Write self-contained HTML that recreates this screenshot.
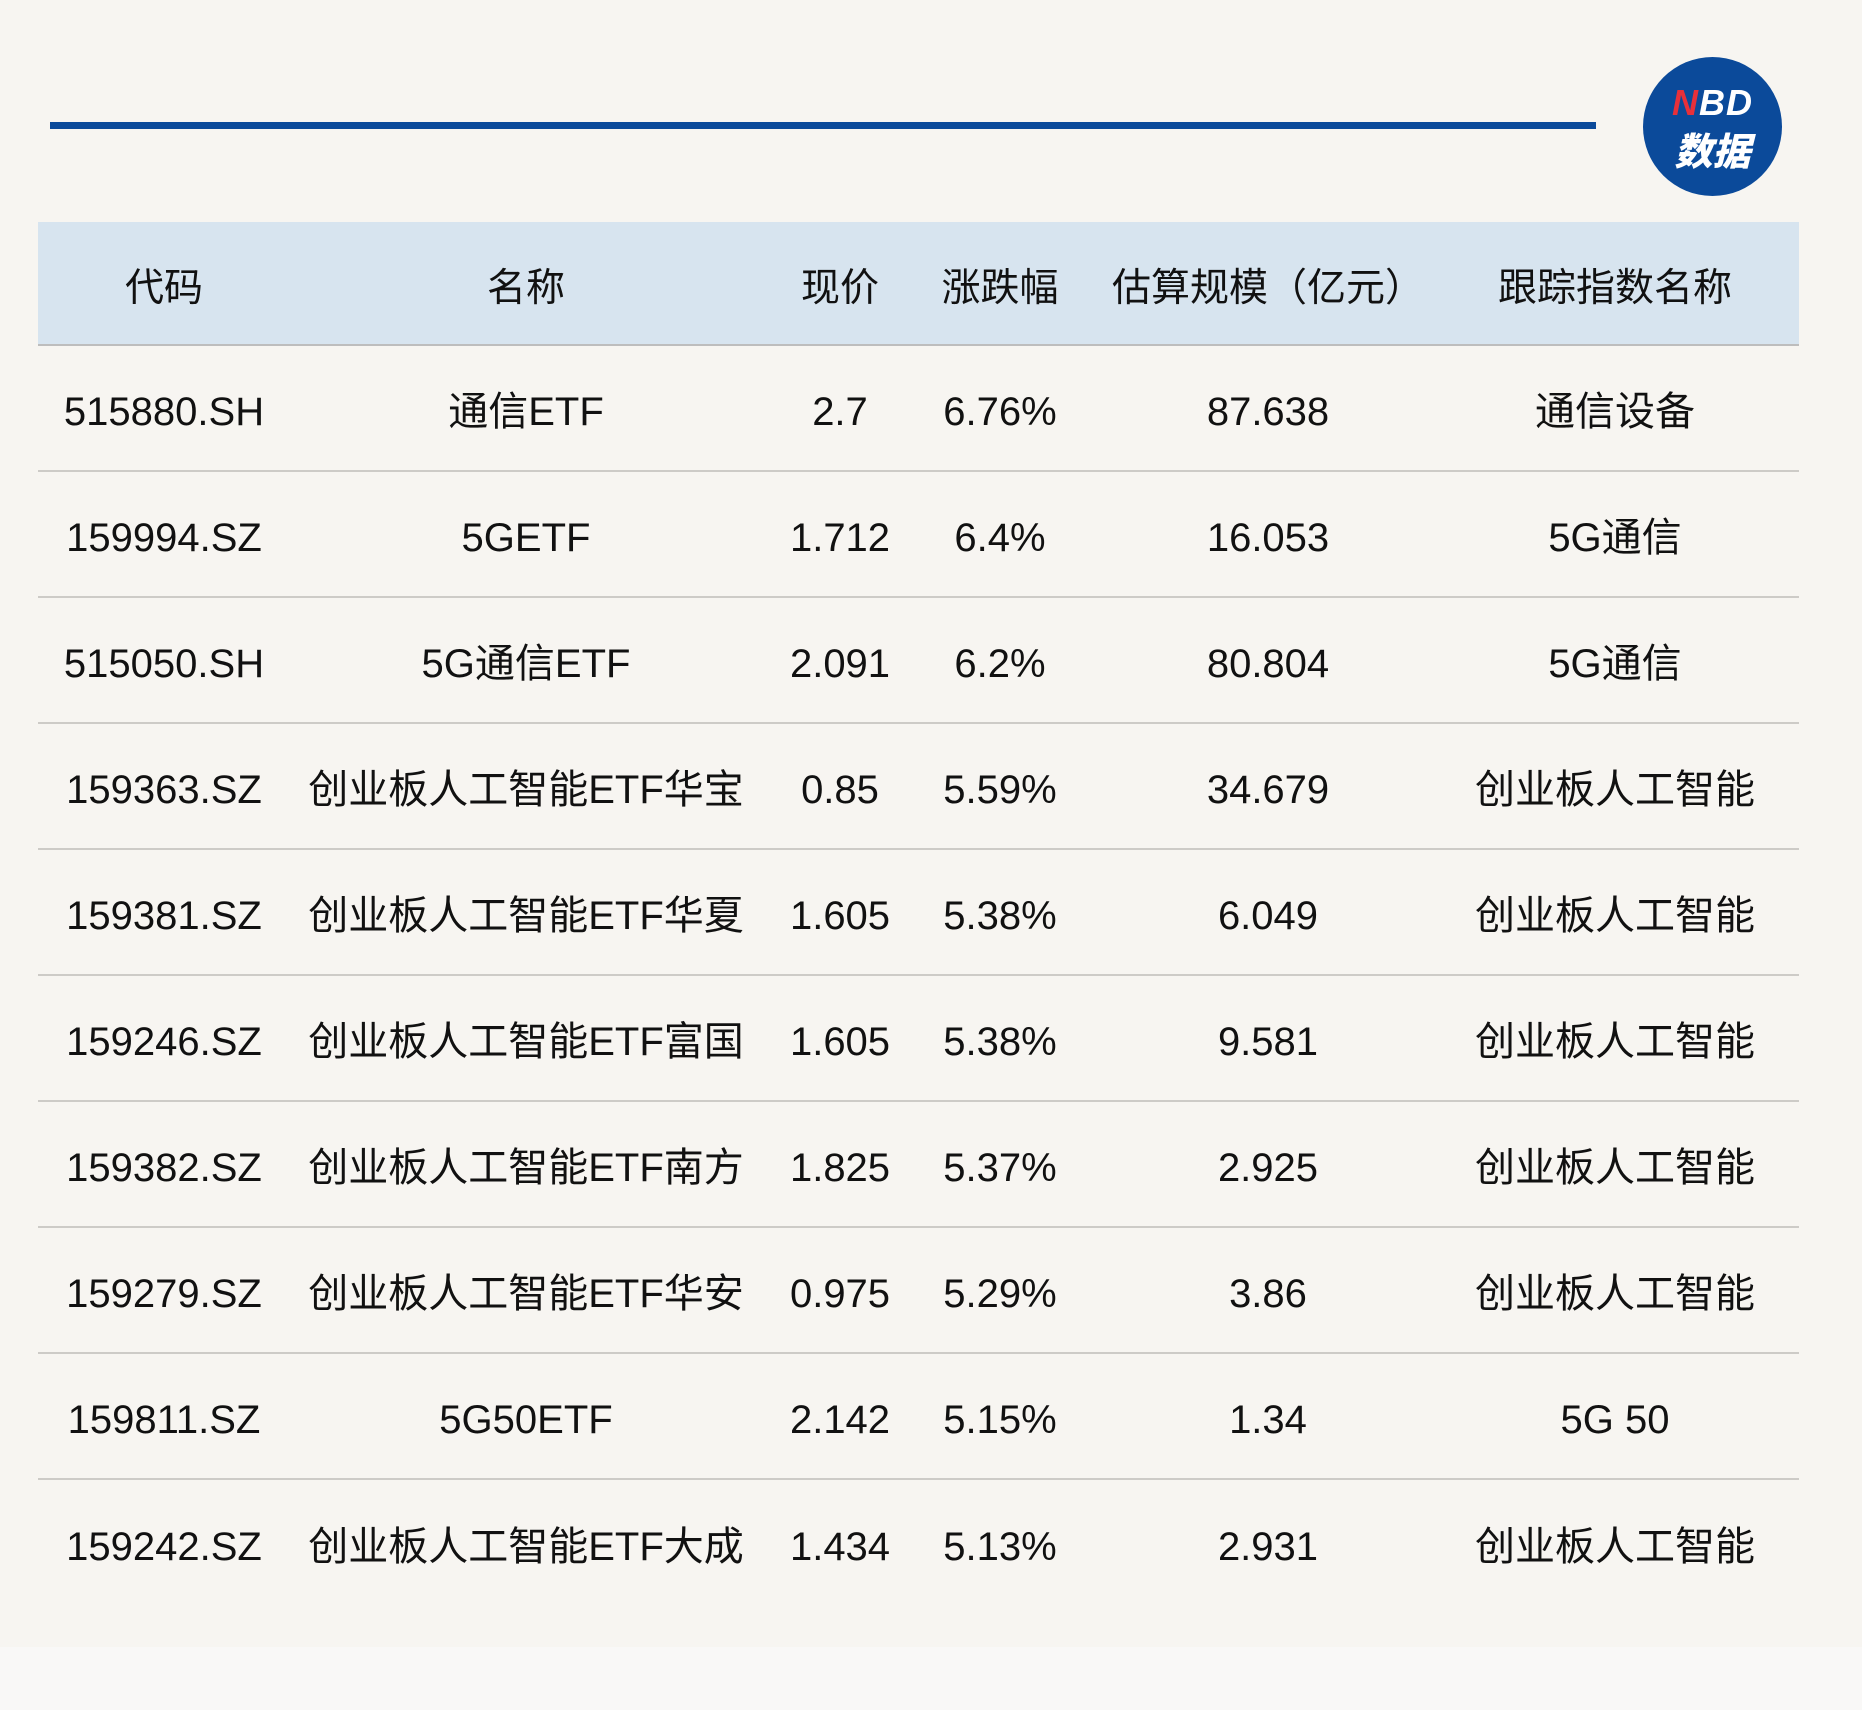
<!DOCTYPE html>
<html><head><meta charset="utf-8"><style>
*{margin:0;padding:0;box-sizing:border-box}
body{width:1862px;height:1710px;background:#f7f5f1;position:relative;overflow:hidden;font-family:"Liberation Sans","Noto Sans CJK SC",sans-serif;color:#111}
.bar{position:absolute;left:50px;top:122px;width:1546px;height:7px;background:#0b4a9a}
.logo{position:absolute;left:1643px;top:57px;width:139px;height:139px;border-radius:50%;background:#0b4a9a;color:#fff;text-align:center;font-weight:bold}
.logo .a{position:absolute;top:25px;left:0;right:0;font-size:36px;font-style:italic;letter-spacing:1px}
.logo .b{position:absolute;top:64px;left:0;right:0;font-size:38px;font-family:"Noto Sans CJK SC",sans-serif;font-weight:900;font-style:italic}
.hd{position:absolute;left:38px;top:222px;width:1761px;height:124px;background:#d7e4ef;border-bottom:2px solid #bdbdbd}
.row{position:absolute;left:38px;width:1761px;height:126px;border-bottom:2px solid #cdcbc7}
.c{position:absolute;top:0;height:100%;display:flex;align-items:center;justify-content:center;font-size:40px;white-space:nowrap;padding-top:8px;line-height:1}
.hd .c{font-family:"Noto Sans CJK SC",sans-serif;font-size:39px;padding-top:4px}
.foot{position:absolute;left:0;top:1647px;width:1862px;height:63px;background:#f9f8f7}
</style></head><body>
<div class="bar"></div>
<div class="logo"><div class="a"><span style="color:#e8303a">N</span>BD</div><div class="b">数据</div></div>
<div class="hd">
<div class="c" style="left:26px;width:200px">代码</div>
<div class="c" style="left:388px;width:200px">名称</div>
<div class="c" style="left:752px;width:100px">现价</div>
<div class="c" style="left:882px;width:160px">涨跌幅</div>
<div class="c" style="left:1060px;width:340px">估算规模（亿元）</div>
<div class="c" style="left:1427px;width:300px">跟踪指数名称</div>
</div>
<div id="rows"></div>
<div class="foot"></div>
<script>
var d=[["515880.SH","通信ETF","2.7","6.76%","87.638","通信设备"],["159994.SZ","5GETF","1.712","6.4%","16.053","5G通信"],["515050.SH","5G通信ETF","2.091","6.2%","80.804","5G通信"],["159363.SZ","创业板人工智能ETF华宝","0.85","5.59%","34.679","创业板人工智能"],["159381.SZ","创业板人工智能ETF华夏","1.605","5.38%","6.049","创业板人工智能"],["159246.SZ","创业板人工智能ETF富国","1.605","5.38%","9.581","创业板人工智能"],["159382.SZ","创业板人工智能ETF南方","1.825","5.37%","2.925","创业板人工智能"],["159279.SZ","创业板人工智能ETF华安","0.975","5.29%","3.86","创业板人工智能"],["159811.SZ","5G50ETF","2.142","5.15%","1.34","5G 50"],["159242.SZ","创业板人工智能ETF大成","1.434","5.13%","2.931","创业板人工智能"]];
var L=[[26,200],[288,400],[752,100],[882,160],[1060,340],[1427,300]];
var h="";
d.forEach(function(r,i){h+='<div class="row" style="top:'+(346+i*126)+'px;'+(i==9?'border-bottom:none':'')+'">';
r.forEach(function(t,j){h+='<div class="c" style="left:'+L[j][0]+'px;width:'+L[j][1]+'px">'+t+'</div>'});h+='</div>'});
document.getElementById('rows').innerHTML=h;
</script>
</body></html>
